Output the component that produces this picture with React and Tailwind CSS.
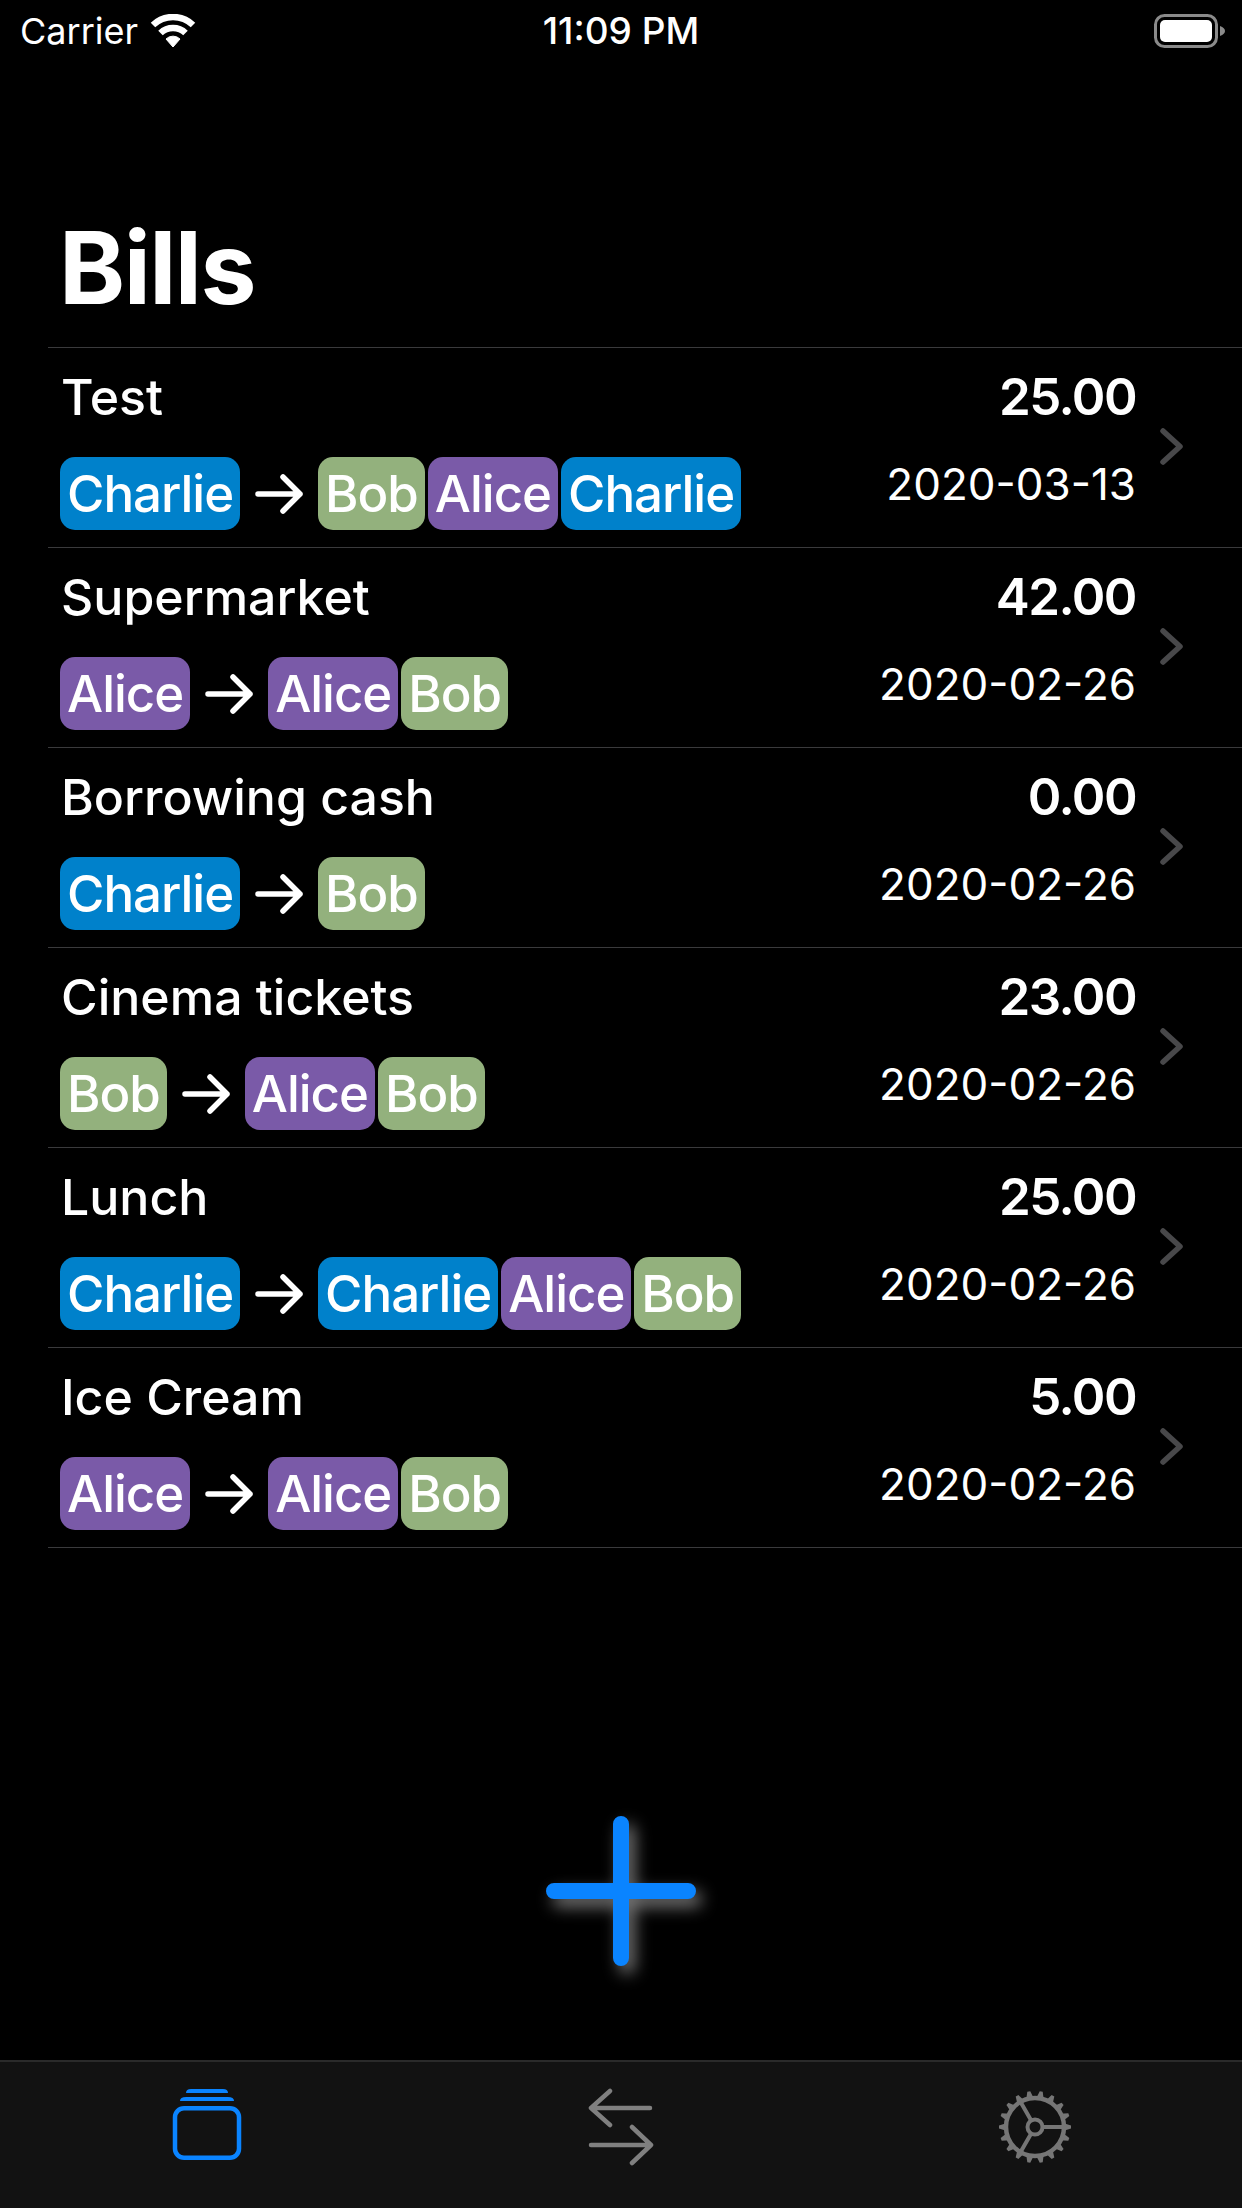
import React from 'react';

const bills = [
  { name: 'Test', amount: '25.00', date: '2020-03-13', from: 'Charlie', to: ['Bob', 'Alice', 'Charlie'] },
  { name: 'Supermarket', amount: '42.00', date: '2020-02-26', from: 'Alice', to: ['Alice', 'Bob'] },
  { name: 'Borrowing cash', amount: '0.00', date: '2020-02-26', from: 'Charlie', to: ['Bob'] },
  { name: 'Cinema tickets', amount: '23.00', date: '2020-02-26', from: 'Bob', to: ['Alice', 'Bob'] },
  { name: 'Lunch', amount: '25.00', date: '2020-02-26', from: 'Charlie', to: ['Charlie', 'Alice', 'Bob'] },
  { name: 'Ice Cream', amount: '5.00', date: '2020-02-26', from: 'Alice', to: ['Alice', 'Bob'] },
];

const chipColors = {
  Charlie: 'bg-[#0081cb]',
  Bob: 'bg-[#93b17d]',
  Alice: 'bg-[#7a5aa8]',
};

const Chip = ({ name }) => (
  <span className={`flex h-[73px] items-center rounded-[15px] px-[7px] text-[51px] leading-none font-medium tracking-[-0.02em] text-white ${chipColors[name]}`}>
    {name}
  </span>
);

const StatusBar = () => (
  <div className="flex h-[62px] items-center justify-between pl-[20px] pr-[16px] text-[36px] text-white">
    <div className="flex items-center gap-[12px]">
      <span>Carrier</span>
      <svg width="46" height="34" viewBox="0 0 46 34" fill="none" stroke="white" strokeWidth="6.5">
        <path d="M3 11 A29 29 0 0 1 43 11" />
        <path d="M10.5 19 A18 18 0 0 1 35.5 19" />
        <path d="M23 33 L16 25 A10 10 0 0 1 30 25 Z" fill="white" strokeWidth="1" />
      </svg>
    </div>
    <span className="absolute left-0 right-0 text-center text-[37px] font-medium">11:09 PM</span>
    <svg width="72" height="34" viewBox="0 0 72 34" fill="none">
      <rect x="1.5" y="1.5" width="61" height="31" rx="9" stroke="#8a8a8a" strokeWidth="3" />
      <rect x="6" y="6" width="52" height="22" rx="5" fill="white" />
      <path d="M66 12 Q71 14 71 17 Q71 20 66 22 Z" fill="#8a8a8a" />
    </svg>
  </div>
);

const BillRow = ({ bill }) => (
  <div className="flex h-[200px] items-center border-b border-[#3a3a3c]">
    <div className="flex h-full min-w-0 flex-1 flex-col pl-[12px]">
      <div className="mt-[21px] h-[56px] pl-[1px] text-[50px] leading-[56px] font-medium text-white">{bill.name}</div>
      <div className="mt-[32px] flex items-center">
        <Chip name={bill.from} />
        <svg className="mx-[15px]" width="48" height="40" viewBox="0 0 48 40" fill="none" stroke="white" strokeWidth="5.5" strokeLinecap="round" strokeLinejoin="round">
          <path d="M3 20 H45 M28 3 L45 20 L28 37" />
        </svg>
        <div className="flex gap-[3px]">
          {bill.to.map((name, i) => (
            <Chip key={i} name={name} />
          ))}
        </div>
      </div>
    </div>
    <div className="flex h-full flex-col items-end pr-[1px]">
      <div className="mt-[21px] h-[56px] text-[51px] leading-[56px] font-semibold tracking-[-0.03em] text-white">{bill.amount}</div>
      <div className="mt-[31px] text-[44px] leading-[56px] text-white">{bill.date}</div>
    </div>
    <svg className="mb-[3px] ml-[23px] mr-[59px]" width="23" height="37" viewBox="0 0 23 37" fill="none" stroke="#48484a" strokeWidth="5.5" strokeLinecap="round" strokeLinejoin="round">
      <path d="M3 3 L20 18.5 L3 34" />
    </svg>
  </div>
);

const BillsIcon = () => (
  <svg width="72" height="80" viewBox="0 0 72 80" fill="none" stroke="#0a84ff">
    <path d="M15 6 Q15 2 20 2 H52 Q57 2 57 6 Z" fill="#0a84ff" stroke="none" />
    <path d="M9 14 Q9 10 15 10 H57 Q63 10 63 14 Z" fill="#0a84ff" stroke="none" />
    <rect x="4" y="21.25" width="64" height="49.5" rx="9" strokeWidth="4.5" />
  </svg>
);

const TransferIcon = () => (
  <svg width="68" height="78" viewBox="0 0 68 78" fill="none" stroke="#808080" strokeWidth="4.5" strokeLinecap="round" strokeLinejoin="round">
    <path d="M63 20 H4 M23 3 L4 20 L23 37" />
    <path d="M4 57 H64 M45 39 L64 57 L45 75" />
  </svg>
);

const SettingsIcon = () => {
  const teeth = Array.from({ length: 18 }, (_, i) => i * 20);
  return (
    <svg width="76" height="76" viewBox="-38 -38 76 76" fill="none" stroke="#767676">
      {teeth.map((a) => (
        <path key={a} d="M-4 -28 L-1.5 -36 H1.5 L4 -28 Z" fill="#767676" stroke="none" transform={`rotate(${a + 90})`} />
      ))}
      <circle r="29" strokeWidth="4.5" />
      <circle r="7.5" strokeWidth="4" />
      <path d="M7.5 0 H28 M-3.8 -6.5 L-15 -26 M-3.8 6.5 L-15 26" strokeWidth="4" />
    </svg>
  );
};

const AddButton = () => (
  <svg className="drop-shadow-[6px_8px_8px_rgba(255,255,255,0.45)]" width="150" height="150" viewBox="0 0 150 150" fill="none" stroke="#0a84ff" strokeWidth="16" strokeLinecap="round">
    <path d="M75 8 V142 M8 75 H142" />
  </svg>
);

export default function App() {
  return (
    <div className="relative flex h-[2208px] w-[1242px] flex-col overflow-hidden bg-black font-[Inter,sans-serif]">
      <StatusBar />
      <h1 className="mt-[146px] ml-[59px] h-[139px] text-[100px] leading-[120px] font-bold tracking-[-0.015em] text-white">Bills</h1>
      <div className="ml-[48px] border-t border-[#3a3a3c]">
        {bills.map((bill) => (
          <BillRow key={bill.name} bill={bill} />
        ))}
      </div>
      <div className="flex flex-1 justify-center pt-[268px]">
        <AddButton />
      </div>
      <div className="flex h-[148px] items-center border-t-2 border-[#2a2a2a] bg-[#121212] pb-[16px]">
        <div className="flex flex-1 justify-center"><BillsIcon /></div>
        <div className="flex flex-1 justify-center"><TransferIcon /></div>
        <div className="flex flex-1 justify-center"><SettingsIcon /></div>
      </div>
    </div>
  );
}
